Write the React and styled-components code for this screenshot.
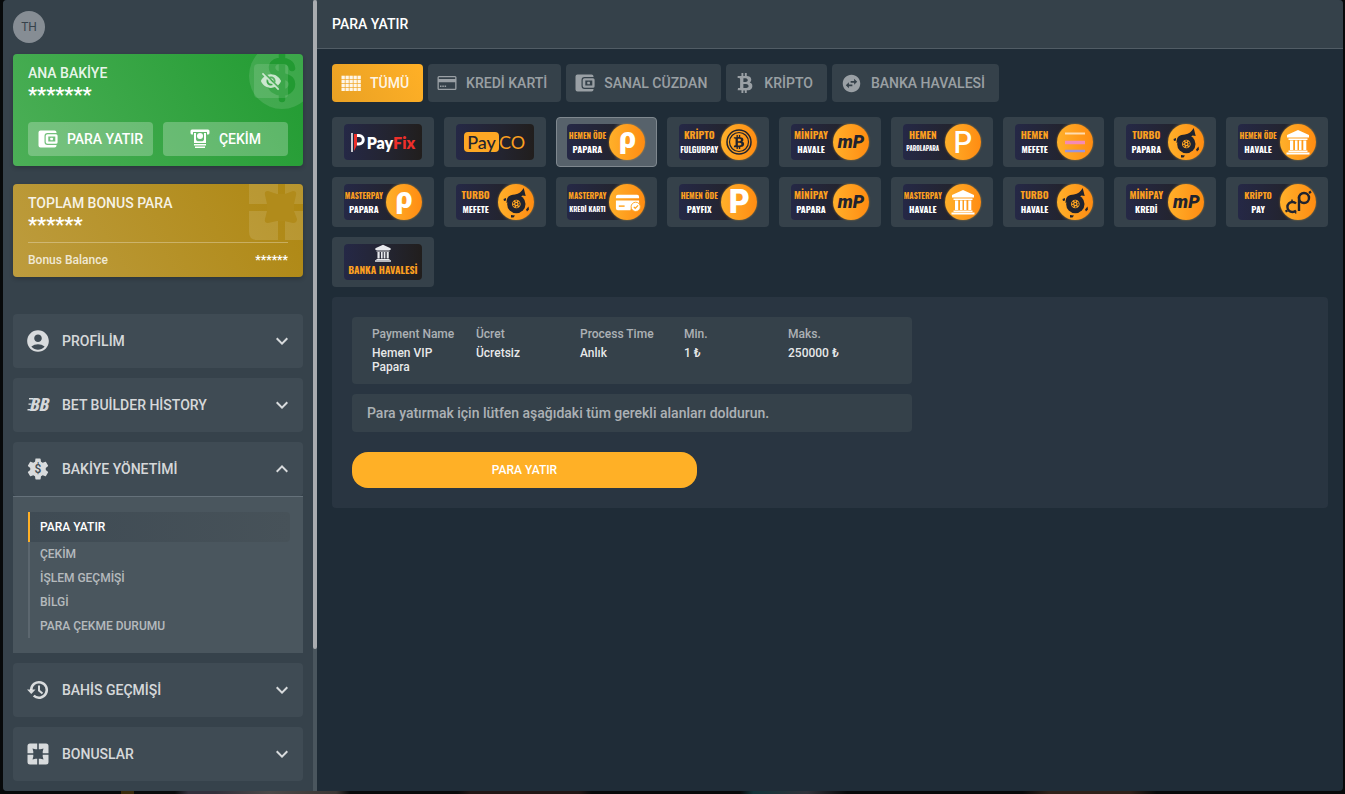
import React from 'react';
import styled, { createGlobalStyle } from 'styled-components';
import {
  MdAccountCircle,
  MdVisibilityOff,
  MdSwapHorizontalCircle,
  MdKeyboardArrowDown,
  MdKeyboardArrowUp,
  MdSettings,
} from 'react-icons/md';
import { FaBtc } from 'react-icons/fa';

const theme = {
  accent: '#ffb026',
  content: '#1f2c37',
  side: '#36424b',
  item: '#3f4b54',
  sub: '#4a565e',
  panel: '#293541',
  tile: '#35414a',
  white: '#ffffff',
  text: 'rgba(255, 255, 255, 0.8)',
  muted: 'rgba(255, 255, 255, 0.5)',
  narrow: '"Oswald", "Noto Sans ExtraCondensed", "Noto Sans Condensed", "Roboto Condensed", "Liberation Sans Narrow", sans-serif',
};

const GlobalStyle = createGlobalStyle`
  * {
    box-sizing: border-box;
  }

  html, body {
    margin: 0;
    height: 100%;
    background: #050607;
  }

  body {
    font-family: Roboto, sans-serif;
    font-size: 14px;
    font-weight: 500;
    color: ${theme.white};
  }

  #root {
    height: 100%;
  }

  button {
    border: 0;
    padding: 0;
    font: inherit;
    color: inherit;
    background: none;
    cursor: pointer;
  }

  svg {
    display: block;
    flex-shrink: 0;
  }
`;

/* ---------- icons ---------- */

const WalletIcon = () => (
  <svg width="20" height="20" viewBox="0 0 20 20" fill="currentColor">
    <path d="M2.500 1.500h14a2 2 0 0 1 2 2V4H9.500a3 3 0 0 0-3 3v6a3 3 0 0 0 3 3h9v.5a2 2 0 0 1-2 2h-14a2 2 0 0 1-2-2v-13a2 2 0 0 1 2-2z" />
    <path
      fillRule="evenodd"
      d="M9.500 5.200h8.500a1.600 1.600 0 0 1 1.600 1.600v6.400a1.600 1.600 0 0 1-1.600 1.600H9.500A1.800 1.800 0 0 1 7.700 13V7A1.800 1.800 0 0 1 9.500 5.200zm.8 2.200v5.200h7V7.400z"
    />
    <rect x="12.300" y="8.700" width="2.600" height="2.600" rx=".6" />
  </svg>
);

const CashIcon = () => (
  <svg width="20" height="20" viewBox="0 0 20 20" fill="currentColor">
    <path d="M2 .5h16a1.500 1.500 0 0 1 1.500 1.500v2A1.500 1.500 0 0 1 18 5.500h-1V3H3v2.500H2A1.500 1.500 0 0 1 .5 4V2A1.500 1.500 0 0 1 2 .5z" />
    <path fillRule="evenodd" d="M4 4h12v10H4zm2 0v6.500a2 2 0 0 0 1.500 1.700h5a2 2 0 0 0 1.500-1.700V4z" />
    <circle cx="10" cy="7" r="3" />
    <path d="M4 15h12v1.500H4zM5 17.500h10V19H5z" />
  </svg>
);

const GridIcon = () => (
  <svg width="20" height="20" viewBox="0 0 20 20" fill="currentColor">
    {[3, 7, 11, 15].map((y) => [0, 4, 8, 12, 16].map((x) => <rect key={`${x}-${y}`} x={x + 0.5} y={y - 0.3} width="3.300" height="3.300" />))}
  </svg>
);

const CardIcon = () => (
  <svg width="20" height="20" viewBox="0 0 20 20" fill="currentColor">
    <path
      fillRule="evenodd"
      d="M2 3h16a1.500 1.500 0 0 1 1.500 1.500v11A1.500 1.500 0 0 1 18 17H2a1.500 1.500 0 0 1-1.500-1.500v-11A1.500 1.500 0 0 1 2 3zm-.2 1.300v1.700h16.400V4.300zm0 5v6.400h16.400V9.300z"
    />
    <path d="M3 12.500h1.500V14H3zM5.300 12.500h1.500V14H5.300zM7.600 12.500h1.500V14H7.600z" />
  </svg>
);

const HistoryIcon = () => (
  <svg width="24" height="24" viewBox="0 0 24 24" fill="none" stroke="currentColor" strokeWidth="2.500">
    <path d="M5.200 12a7.800 7.800 0 1 1 2.500 5.700" />
    <path d="M13 7.500v5l3.500 3" strokeWidth="2" />
    <path d="M1 11.500h8.500l-4.200 4.500z" fill="currentColor" stroke="none" />
  </svg>
);

const FrameIcon = () => (
  <svg width="22" height="22" viewBox="0 0 22 22" fill="currentColor">
    <path d="M3 .5h7.200v9.700H.5V3A2.500 2.500 0 0 1 3 .5zM11.800.5H19A2.500 2.500 0 0 1 21.500 3v7.200h-9.700zM.5 11.800h9.700v9.700H3A2.500 2.500 0 0 1 .5 19zM11.800 11.800h9.700V19a2.500 2.500 0 0 1-2.500 2.500h-7.200z" />
    <path d="M5.500 5.500l3 .8h5l3-.8-.8 3v5l.8 3-3-.8h-5l-3 .8.8-3v-5z" fill={theme.item} />
  </svg>
);

const BetIcon = () => (
  <svg width="24" height="26" viewBox="0 0 24 26" fill="currentColor">
    <text x="3" y="19" fontFamily="Oswald, Roboto, sans-serif" fontSize="16" fontStyle="italic" fontWeight="700">
      BB
    </text>
    <path d="M3 6h4v1.500H3zM2.500 11.500h3v1.300h-3zM1.500 17h3v1.500h-3z" />
  </svg>
);

const BankMark = ({ size = 26, color = theme.white }) => (
  <svg width={size} height={size} viewBox="0 0 26 26" fill={color}>
    <path d="M13 1l11 5v2.500H2V6zM3.500 9.500h19v1.500h-19zM5 11.500h3.200V21H5zM10 11.500h2.500V21H10zM14 11.500h2.500V21H14zM18.300 11.500h3V21h-3zM3.500 21.500h19V23h-19zM1.500 23.500h23V25.500h-23z" />
  </svg>
);

const TurboMark = () => (
  <svg width="36" height="36" viewBox="0 0 36 36" fill="#20232f">
    <path d="M8.500 19C8.500 12 12 11 17 10.500c4-.5 6.500-3 8.700-6.500l2 8-3.200-.6C22 14 20 14 18 15z" />
    <circle cx="18.300" cy="20" r="9.200" />
    <circle cx="18.300" cy="20" r="4.300" fill="#ffa522" />
    <circle cx="18.300" cy="20" r="2.900" fill="none" stroke="#20232f" strokeWidth="1.300" strokeDasharray="1.800 1.300" />
    <circle cx="18.300" cy="20" r="1" />
    <path d="M5.500 15l2.500-1v2.500L6 17zM13 31l4 .5-1.500 2h-2.500zM28 25.500l2.500-3 .5 3-2 2z" />
  </svg>
);

const CardMark = () => (
  <svg width="27" height="27" viewBox="0 0 28 28" fill="#ffffff">
    <path d="M4 6h20a2 2 0 0 1 2 2v1.500H2V8a2 2 0 0 1 2-2zM2 12h24v6H18l-1 4H4a2 2 0 0 1-2-2z" />
    <path d="M5 17h6v1.500H5z" fill="#ffa522" />
    <circle cx="22.500" cy="18.500" r="4.800" stroke="#ffa522" />
    <path d="M20.500 18.500l1.500 1.500 3-3" fill="none" stroke="#ffa522" strokeWidth="1.300" />
  </svg>
);

const LinesMark = () => (
  <svg width="20" height="22" viewBox="0 0 20 22">
    <path d="M0 2.500h20" stroke="#ffdcb0" strokeWidth="2" />
    <path d="M0 11.500h20" stroke="#f58bb4" strokeWidth="3.500" />
    <path d="M0 20h20" stroke="#9b94dc" strokeWidth="2.500" />
  </svg>
);

const BitcoinMark = () => (
  <svg width="26" height="26" viewBox="0 0 26 26" fill="none" stroke="#20232f">
    <circle cx="13" cy="13" r="12" strokeWidth="1.500" />
    <circle cx="13" cy="13" r="9.500" strokeWidth="1.200" />
    <FaBtc x="6" y="6" size="14" fill="#20232f" stroke="none" />
  </svg>
);

const LoopMark = () => (
  <svg width="28" height="26" viewBox="0 0 28 26" fill="none" stroke="#20232f">
    <path d="M12 14.500a5 5 0 1 0 0 7" strokeWidth="2.400" />
    <circle cx="20" cy="9" r="5" strokeWidth="2.400" />
    <path d="M15 8v14" strokeWidth="2.400" />
    <path d="M25 4l2-1.500M1.500 22.500l2-1" strokeWidth="2.200" />
    <path d="M8 10.500v3M11 22.500l1 2" strokeWidth="1.500" />
  </svg>
);

/* ---------- frame ---------- */

const Backdrop = styled.div`
  min-height: 100%;
  display: flex;
  padding: 0 2px 3px 3px;
  background: linear-gradient(
    90deg,
    #07090a 0 9%, #3a2c0c 9% 10%, #0a0b0c 10% 13%, #33303c 14% 16%, #4b4848 20%, #3b3634 25%,
    #090a0b 26% 34%, #221615 35% 43%, #08090a 44% 55%, #13343a 56%, #30323a 60%, #08090a 63% 76%,
    #30211a 78% 84%, #08090a 86%
  );
`;

const Dialog = styled.div`
  flex: 1;
  display: flex;
  overflow: hidden;
  border-radius: 4px;
  background: ${theme.content};
`;

const Sidebar = styled.aside`
  width: 310px;
  padding: 11px 10px 10px;
  background: ${theme.side};
`;

const ScrollTrack = styled.div`
  width: 4px;
  background: ${theme.sub};
`;

const ScrollThumb = styled.div`
  height: 82%;
  border-radius: 2px;
  background: #a9acb0;
`;

const Avatar = styled.div`
  width: 32px;
  height: 32px;
  margin-bottom: 11px;
  border-radius: 50%;
  background: #868d94;
  color: #36424b;
  font-size: 12px;
  font-weight: 400;
  line-height: 32px;
  text-align: center;
`;

/* ---------- balance cards ---------- */

const BalanceCard = styled.section`
  position: relative;
  overflow: hidden;
  margin-bottom: ${(props) => (props.$gold ? 37 : 18)}px;
  padding: 10px 15px ${(props) => (props.$gold ? 9 : 10)}px;
  border-radius: 4px;
  background: ${(props) =>
    props.$gold ? 'linear-gradient(60deg, #bd9c3e, #ae8712)' : 'linear-gradient(60deg, #4caf57, #219b31)'};
  box-shadow: 0 2px 4px rgba(0, 0, 0, 0.2);
`;

const CardArt = styled.svg`
  position: absolute;
  top: 0;
  right: 0;
`;

const CardHead = styled.div`
  position: relative;
  display: flex;
  justify-content: space-between;
  margin-bottom: ${(props) => props.$space}px;
`;

const CardTitle = styled.h2`
  margin: 0;
  font-size: 14px;
  font-weight: 500;
  line-height: 18px;
  color: rgba(255, 255, 255, 0.9);
`;

const Masked = styled.div`
  font-size: 20px;
  font-weight: 700;
  line-height: 26px;
`;

const EyeButton = styled.button`
  display: grid;
  place-items: center;
  width: 34px;
  height: 34px;
  border-radius: 4px;
  background: rgba(255, 255, 255, 0.12);
  color: rgba(255, 255, 255, 0.7);
`;

const CardActions = styled.div`
  display: grid;
  grid-template-columns: 1fr 1fr;
  gap: 10px;
`;

const CardButton = styled.button`
  display: flex;
  align-items: center;
  justify-content: center;
  gap: 9px;
  height: 34px;
  border-radius: 4px;
  background: rgba(255, 255, 255, 0.25);
`;

const BonusRow = styled.div`
  position: relative;
  display: flex;
  justify-content: space-between;
  padding-top: 9px;
  border-top: 1px solid rgba(255, 255, 255, 0.3);
  font-size: 12px;
  line-height: 16px;
  color: rgba(255, 255, 255, 0.8);
`;

const BonusAmount = styled.b`
  color: ${theme.white};
`;

/* ---------- menu ---------- */

const Menu = styled.nav`
  display: flex;
  flex-direction: column;
  gap: 10px;
`;

const MenuButton = styled.button`
  display: flex;
  align-items: center;
  width: 100%;
  height: 54px;
  padding: 0 9px 0 12px;
  border-radius: 4px;
  background: ${theme.item};
  color: ${theme.text};
`;

const MenuLabel = styled.span`
  flex: 1;
  margin-left: 11px;
  text-align: left;
`;

const MenuIcon = styled.span`
  display: grid;
  place-items: center;
  width: 26px;
  height: 26px;
`;

const GearStack = styled.span`
  display: grid;
  place-items: center;

  > * {
    grid-area: 1 / 1;
  }
`;

const GearCore = styled.span`
  width: 12px;
  height: 12px;
  border-radius: 50%;
  background: #d9dbdd;
  color: ${theme.item};
  font-size: 12px;
  line-height: 12px;
`;

const SubMenu = styled.div`
  padding: 15px 13px 15px 15px;
  border-top: 1px solid #65717a;
  background: ${theme.sub};
`;

const SubLink = styled.a`
  display: block;
  height: ${(props) => (props.$active ? 30 : 24)}px;
  padding-left: 10px;
  border-left: 2px solid ${(props) => (props.$active ? theme.accent : '#5c676f')};
  border-radius: ${(props) => (props.$active ? '0 4px 4px 0' : 0)};
  background: ${(props) => (props.$active ? 'linear-gradient(90deg, #3f4b54, #475259)' : 'none')};
  color: ${(props) => (props.$active ? theme.white : 'rgba(255, 255, 255, 0.6)')};
  font-size: 12px;
  line-height: ${(props) => (props.$active ? 30 : 24)}px;
  text-decoration: none;
`;

/* ---------- content ---------- */

const Content = styled.main`
  flex: 1;
  min-width: 0;
`;

const Header = styled.h1`
  margin: 0;
  padding: 0 15px;
  border-bottom: 1px solid #515c65;
  background: #35414a;
  font-size: 14px;
  font-weight: 500;
  line-height: 48px;
`;

const Body = styled.div`
  padding: 15px;
`;

const Tabs = styled.div`
  display: flex;
  flex-wrap: wrap;
  gap: 5px;
  margin-bottom: 15px;
`;

const Tab = styled.button`
  display: flex;
  align-items: center;
  gap: 9px;
  height: 38px;
  padding: 0 14px 0 9px;
  border-radius: 4px;
  background: ${(props) => (props.$active ? 'linear-gradient(60deg, #e9a124, #ffb026)' : theme.tile)};
  color: ${(props) => (props.$active ? 'rgba(255, 255, 255, 0.9)' : theme.muted)};
`;

const Methods = styled.div`
  display: grid;
  grid-template-columns: repeat(9, 1fr);
  gap: 10px;
  margin-bottom: 10px;
`;

const Method = styled.button`
  display: grid;
  place-items: center;
  height: 50px;
  border: 1px solid ${(props) => (props.$active ? '#7f888f' : 'transparent')};
  border-radius: 4px;
  background: ${(props) => (props.$active ? '#57626b' : theme.tile)};
  background-clip: border-box;
`;

const Logo = styled.span`
  display: flex;
  flex-direction: ${(props) => (props.$stacked ? 'column' : 'row')};
  align-items: center;
  justify-content: ${(props) => (props.$split ? 'space-between' : props.$stacked ? 'flex-start' : 'center')};
  width: 78px;
  height: 36px;
  border-radius: ${(props) => (props.$split ? '4px 18px 18px 4px' : '4px')};
  background: ${(props) =>
    props.$split
      ? 'linear-gradient(90deg, #252846, #23242f 60%, transparent 75%)'
      : 'linear-gradient(90deg, #252846, #23242f 60%, #211e1d)'};
`;

const Caption = styled.span`
  display: flex;
  flex-direction: column;
  align-items: center;
  width: 40px;
  font-family: ${theme.narrow};
  font-weight: 700;
  white-space: nowrap;
`;

const CaptionLine = styled.span`
  font-size: ${(props) => props.$size}px;
  line-height: 14px;
  color: ${(props) => (props.$accent ? '#fb9f20' : theme.white)};
`;

const Disc = styled.span`
  display: grid;
  place-items: center;
  width: 36px;
  height: 36px;
  border-radius: 50%;
  background: linear-gradient(90deg, #ffb02a, #ff8c12);
  box-shadow: 0 0 2px rgba(255, 176, 38, 0.6);
`;

const Letter = styled.span`
  padding-bottom: ${(props) => (props.$descends ? 8 : 0)}px;
  font-family: ${(props) => props.$family || 'Inter, sans-serif'};
  font-size: ${(props) => props.$size}px;
  font-style: ${(props) => (props.$italic ? 'italic' : 'normal')};
  font-weight: ${(props) => props.$weight || 800};
  line-height: ${(props) => (props.$descends ? 28 : 36)}px;
  color: ${(props) => (props.$dark ? '#20232f' : theme.white)};
`;

const PayFixName = styled.span`
  display: flex;
  align-items: center;
  gap: 2px;
  font-family: Lato, sans-serif;
  font-size: 16px;
  font-weight: 800;

  i {
    color: #ee2f2a;
    font-style: normal;
  }
`;

const PaycoName = styled.span`
  display: flex;
  align-items: center;
  font-family: Lato, sans-serif;
  font-size: 18px;
  font-weight: 400;
  line-height: 20px;
  color: #fb9f20;

  b {
    padding: 0 3px;
    border-radius: 4px;
    background: #fda724;
    color: #23242f;
    font-weight: 500;
  }
`;

const BankName = styled.span`
  font-family: ${theme.narrow};
  font-size: 10px;
  font-weight: 700;
  line-height: 15px;
  color: #fb9f20;
  white-space: nowrap;
`;

const Panel = styled.section`
  padding: 20px;
  border-radius: 4px;
  background: ${theme.panel};
`;

const Details = styled.dl`
  display: grid;
  grid-template-columns: repeat(5, 1fr);
  max-width: 560px;
  min-height: 67px;
  margin: 0 0 10px;
  padding: 9px 20px;
  border-radius: 4px;
  background: ${theme.tile};
  font-size: 12px;
  line-height: 14px;

  div {
    padding-right: 10px;
  }

  dt {
    margin-bottom: 4px;
    line-height: 16px;
    color: rgba(255, 255, 255, 0.6);
  }

  dd {
    margin: 0;
    color: rgba(255, 255, 255, 0.9);
  }
`;

const Note = styled.p`
  max-width: 560px;
  margin: 0 0 20px;
  padding: 0 15px;
  border-radius: 4px;
  background: ${theme.tile};
  color: rgba(255, 255, 255, 0.6);
  line-height: 38px;
`;

const Submit = styled.button`
  display: block;
  width: 100%;
  max-width: 345px;
  height: 36px;
  border-radius: 16px;
  background: ${theme.accent};
  font-size: 12px;
`;

/* ---------- data ---------- */

const tabs = [
  { label: 'TÜMÜ', icon: <GridIcon />, active: true },
  { label: 'KREDİ KARTİ', icon: <CardIcon /> },
  { label: 'SANAL CÜZDAN', icon: <WalletIcon /> },
  { label: 'KRİPTO', icon: <FaBtc size={20} /> },
  { label: 'BANKA HAVALESİ', icon: <MdSwapHorizontalCircle size={21} /> },
];

const papara = (
  <Letter $size={30} $descends $weight={900} $family="Roboto, sans-serif">
    ρ
  </Letter>
);
const minipay = (
  <Letter $size={18} $italic $dark $weight={900} $family="Roboto, sans-serif">
    mP
  </Letter>
);

const methods = [
  { top: 'HEMEN ÖDE', bottom: 'PAPARA', sizes: [8, 9], mark: papara, active: true },
  { top: 'KRİPTO', bottom: 'FULGURPAY', sizes: [10, 8], mark: <BitcoinMark /> },
  { top: 'MİNİPAY', bottom: 'HAVALE', sizes: [10, 9], mark: minipay },
  { top: 'HEMEN', bottom: 'PAROLAPARA', sizes: [10, 6], mark: <Letter $size={30} $weight={500}>P</Letter> },
  { top: 'HEMEN', bottom: 'MEFETE', sizes: [10, 9], mark: <LinesMark /> },
  { top: 'TURBO', bottom: 'PAPARA', sizes: [10, 9], mark: <TurboMark /> },
  { top: 'HEMEN ÖDE', bottom: 'HAVALE', sizes: [8, 9], mark: <BankMark /> },
  { top: 'MASTERPAY', bottom: 'PAPARA', sizes: [8, 9], mark: papara },
  { top: 'TURBO', bottom: 'MEFETE', sizes: [10, 9], mark: <TurboMark /> },
  { top: 'MASTERPAY', bottom: 'KREDİ KARTI', sizes: [8, 7], mark: <CardMark /> },
  { top: 'HEMEN ÖDE', bottom: 'PAYFIX', sizes: [8, 9], mark: <Letter $size={32}>P</Letter> },
  { top: 'MİNİPAY', bottom: 'PAPARA', sizes: [10, 9], mark: minipay },
  { top: 'MASTERPAY', bottom: 'HAVALE', sizes: [8, 9], mark: <BankMark /> },
  { top: 'TURBO', bottom: 'HAVALE', sizes: [10, 9], mark: <TurboMark /> },
  { top: 'MİNİPAY', bottom: 'KREDİ', sizes: [10, 9], mark: minipay },
  { top: 'KRİPTO', bottom: 'PAY', sizes: [9, 9], mark: <LoopMark /> },
];

const details = [
  ['Payment Name', 'Hemen VIP Papara'],
  ['Ücret', 'Ücretsiz'],
  ['Process Time', 'Anlık'],
  ['Min.', '1 ₺'],
  ['Maks.', '250000 ₺'],
];

const subLinks = ['PARA YATIR', 'ÇEKİM', 'İŞLEM GEÇMİŞİ', 'BİLGİ', 'PARA ÇEKME DURUMU'];

const menu = [
  { label: 'PROFİLİM', icon: <MdAccountCircle size={26} /> },
  { label: 'BET BUİLDER HİSTORY', icon: <BetIcon /> },
  {
    label: 'BAKİYE YÖNETİMİ',
    icon: (
      <GearStack>
        <MdSettings size={26} />
        <GearCore>$</GearCore>
      </GearStack>
    ),
    links: subLinks,
  },
  { label: 'BAHİS GEÇMİŞİ', icon: <HistoryIcon /> },
  { label: 'BONUSLAR', icon: <FrameIcon /> },
];

const MenuItem = ({ label, icon, links }) => (
  <div>
    <MenuButton type="button" aria-expanded={Boolean(links)}>
      <MenuIcon>{icon}</MenuIcon>
      <MenuLabel>{label}</MenuLabel>
      {links ? <MdKeyboardArrowUp size={24} /> : <MdKeyboardArrowDown size={24} />}
    </MenuButton>
    {links && (
      <SubMenu>
        {links.map((link, i) => (
          <SubLink href="#" key={link} $active={i === 0}>
            {link}
          </SubLink>
        ))}
      </SubMenu>
    )}
  </div>
);

const PaymentMethod = ({ top, bottom, sizes, mark, active }) => (
  <Method type="button" $active={active}>
    <Logo $split>
      <Caption>
        <CaptionLine $accent $size={sizes[0]}>
          {top}
        </CaptionLine>
        <CaptionLine $size={sizes[1]}>{bottom}</CaptionLine>
      </Caption>
      <Disc>{mark}</Disc>
    </Logo>
  </Method>
);

const App = () => (
  <>
    <GlobalStyle />
    <Backdrop>
      <Dialog>
        <Sidebar>
          <Avatar>TH</Avatar>

          <BalanceCard>
            <CardArt width="54" height="56" viewBox="0 0 54 56">
              <circle cx="33" cy="22" r="33" fill="rgba(255, 255, 255, 0.12)" />
              <path
                d="M33 0v45M43 14c-1-9-19-10-20-1 0 12 20 6 20 17 0 12-21 11-22-1"
                fill="none"
                stroke="#229a32"
                strokeWidth="6.500"
                strokeLinecap="round"
              />
            </CardArt>
            <CardHead $space={14}>
              <div>
                <CardTitle>ANA BAKİYE</CardTitle>
                <Masked>*******</Masked>
              </div>
              <EyeButton type="button" aria-label="Bakiyeyi göster">
                <MdVisibilityOff size={22} />
              </EyeButton>
            </CardHead>
            <CardActions>
              <CardButton type="button">
                <WalletIcon />
                PARA YATIR
              </CardButton>
              <CardButton type="button">
                <CashIcon />
                ÇEKİM
              </CardButton>
            </CardActions>
          </BalanceCard>

          <BalanceCard $gold>
            <CardArt width="54" height="56" viewBox="0 0 54 56" fill="rgba(255, 255, 255, 0.12)">
              <path d="M0 0h29v20H0zM36 0h18v20H36zM0 27h29v29H8q-8 0-8-8zM36 27h18v29H36z" />
              <path
                d="M19 7l9 3h8l8-3q4 0 3 4l-2 9v7l3 8q0 4-4 4l-9-2h-7l-9 2q-4 0-3-4l2-8v-7l-2-9q-1-4 3-4z"
                fill="#b18b1b"
              />
            </CardArt>
            <CardHead $space={4}>
              <div>
                <CardTitle>TOPLAM BONUS PARA</CardTitle>
                <Masked>******</Masked>
              </div>
            </CardHead>
            <BonusRow>
              <span>Bonus Balance</span>
              <BonusAmount>******</BonusAmount>
            </BonusRow>
          </BalanceCard>

          <Menu>
            {menu.map((item) => (
              <MenuItem key={item.label} {...item} />
            ))}
          </Menu>
        </Sidebar>
        <ScrollTrack>
          <ScrollThumb />
        </ScrollTrack>

        <Content>
          <Header>PARA YATIR</Header>
          <Body>
            <Tabs>
              {tabs.map((tab) => (
                <Tab type="button" key={tab.label} $active={tab.active}>
                  {tab.icon}
                  {tab.label}
                </Tab>
              ))}
            </Tabs>

            <Methods>
              <Method type="button">
                <Logo>
                  <PayFixName>
                    <svg width="14" height="19" viewBox="0 0 14 19">
                      <path d="M1 0v19" stroke="#fff" strokeWidth="1.500" />
                      <path d="M3 1h3v11l-3 6z" fill="#ee2f2a" />
                      <path d="M6 2.500h2a4 4 0 0 1 0 8.500H6" fill="none" stroke="#fff" strokeWidth="3" />
                    </svg>
                    <span>
                      Pay<i>Fix</i>
                    </span>
                  </PayFixName>
                </Logo>
              </Method>
              <Method type="button">
                <Logo>
                  <PaycoName>
                    <b>Pay</b>CO
                  </PaycoName>
                </Logo>
              </Method>
              {methods.map((method) => (
                <PaymentMethod key={method.top + method.bottom} {...method} />
              ))}
              <Method type="button">
                <Logo $stacked>
                  <BankMark size={18} color="#e9eaee" />
                  <BankName>BANKA HAVALESİ</BankName>
                </Logo>
              </Method>
            </Methods>

            <Panel>
              <Details>
                {details.map(([name, value]) => (
                  <div key={name}>
                    <dt>{name}</dt>
                    <dd>{value}</dd>
                  </div>
                ))}
              </Details>
              <Note>Para yatırmak için lütfen aşağıdaki tüm gerekli alanları doldurun.</Note>
              <Submit type="button">PARA YATIR</Submit>
            </Panel>
          </Body>
        </Content>
      </Dialog>
    </Backdrop>
  </>
);

export default App;
